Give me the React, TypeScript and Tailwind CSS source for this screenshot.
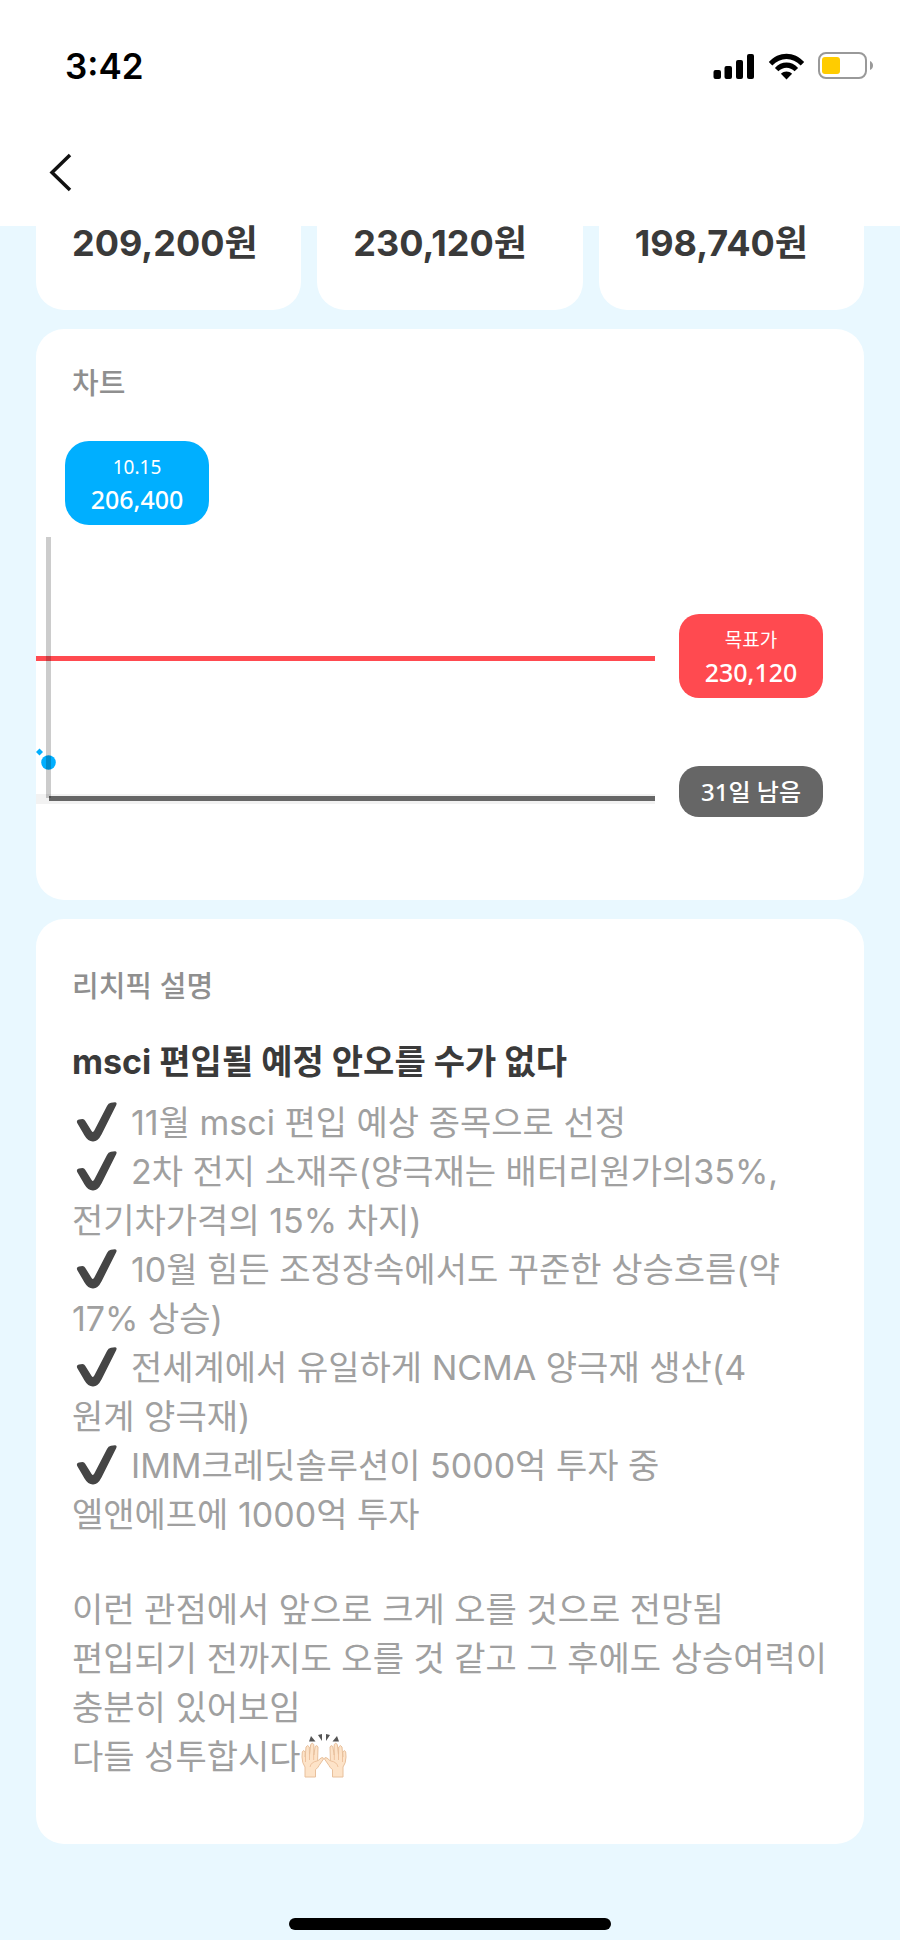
const prices = ['209,200원', '230,120원', '198,740원']

const points = [
  '11월 msci 편입 예상 종목으로 선정',
  '2차 전지 소재주(양극재는 배터리원가의35%,\n전기차가격의 15% 차지)',
  '10월 힘든 조정장속에서도 꾸준한 상승흐름(약\n17% 상승)',
  '전세계에서 유일하게 NCMA 양극재 생산(4\n원계 양극재)',
  'IMM크레딧솔루션이 5000억 투자 중\n엘앤에프에 1000억 투자'
]

const closing =
  '이런 관점에서 앞으로 크게 오를 것으로 전망됨\n편입되기 전까지도 오를 것 같고 그 후에도 상승여력이\n충분히 있어보임\n다들 성투합시다'

function SignalIcon() {
  return (
    <svg width="42" height="27" viewBox="0 0 42 27">
      <rect x="0.5" y="17" width="7.5" height="9" rx="2" />
      <rect x="11.5" y="13" width="7.5" height="13" rx="2" />
      <rect x="23" y="7" width="7" height="19" rx="2" />
      <rect x="34" y="1" width="7" height="25" rx="2" />
    </svg>
  )
}

function WifiIcon() {
  return (
    <svg width="37" height="27" viewBox="0 0 37 27">
      <path d="M.8 9.1C10.5-2.2 26.5-2.2 36.2 9.1L32.7 12.5C24.8 3.8 12.2 3.8 4.3 12.5Z" />
      <path d="M6.9 14.9C13.4 7.7 23.6 7.7 30.1 14.9L26.6 18.3C22 13.6 15 13.6 10.4 18.3Z" />
      <path d="M12.9 20.7C16.2 17.6 20.8 17.6 24.1 20.7L18.5 26.5Z" />
    </svg>
  )
}

function BatteryIcon() {
  return (
    <svg width="56" height="28" viewBox="0 0 56 28">
      <rect x="1" y="1" width="47" height="25" rx="7" fill="none" stroke="#999" strokeWidth="2" />
      <rect x="4" y="5" width="18" height="17" rx="3" fill="#ffcc00" />
      <path d="M52 9Q55 10.5 55 13.5T52 18Z" fill="#999" />
    </svg>
  )
}

function CheckIcon() {
  return (
    <svg className="inline-block mr-2 -mt-2" width="51" height="40" viewBox="0 0 51 40" role="img" aria-label="✔">
      <path
        d="M5.2 21Q4 18.3 7 17.6L10.5 17Q12.3 17 13.2 18.7L19.6 29Q21 31 22.3 28.5L35 4Q36.2 1.3 39 .8L43 .3Q45.3 .5 44.3 3L29.5 32.5Q26 39.5 21 39.4Q16 39.5 12.5 33.5Z"
        fill="#454545"
      />
    </svg>
  )
}

function Hand() {
  return (
    <g>
      <path
        d="M4 44V34Q1 30 1 24L1.3 19Q2.3 16 4.2 19V24L5 14Q6.5 11 8.3 14L8.5 22L9.7 11.5Q11.3 9 12.8 11.5V22L14.2 13.5Q16 11.5 17 14L16.6 28L20 25Q22.5 23.7 22.5 26L18 32.5Q17 35 14.5 36.5V44Z"
        fill="#fde3c8"
        stroke="#e8c09c"
        strokeWidth="1"
        strokeLinejoin="round"
      />
      <path d="M4.5 24V29M8.5 21V27M12.7 21V27M9 34Q10 29 16 28" fill="none" stroke="#eec29e" strokeWidth="1" />
    </g>
  )
}

function RaisedHands() {
  return (
    <svg className="inline-block -mt-2" width="46" height="46" viewBox="0 0 46 46" role="img" aria-label="🙌🏻">
      <Hand />
      <g transform="translate(46 0) scale(-1 1)">
        <Hand />
      </g>
      <path d="M10 3L14.5 8.5L8 8.5ZM17 2L21 1V8ZM29 2L25 1V8ZM36 3L31.5 8.5L38 8.5Z" fill="#555" />
    </svg>
  )
}

function PriceChart() {
  return (
    <svg className="block w-full h-[270px]">
      <rect x="0" y="257" width="100%" height="10" fill="#f2f2f2" />
      <rect x="0" y="119" width="100%" height="5" fill="#ff4a50" />
      <rect x="13" y="259" width="100%" height="5" fill="#666" />
      <path d="M3.5 211.5L7 215L3.5 218.5L0 215Z" fill="#00afff" />
      <circle cx="12.5" cy="225.5" r="7.3" fill="#00afff" />
      <rect x="10" y="0" width="5" height="261" fill="#000" fillOpacity="0.2" />
    </svg>
  )
}

export default function App() {
  return (
    <div className="min-h-screen bg-white font-['Inter','Noto_Sans_CJK_KR',sans-serif]">
      <header className="h-[226px] bg-white">
        <div className="flex items-center justify-between h-[132px] pl-[65px] pr-[26px]">
          <span className="text-[35px] leading-[40px] font-semibold text-black">3:42</span>
          <div className="flex items-center gap-[13px]">
            <SignalIcon />
            <WifiIcon />
            <BatteryIcon />
          </div>
        </div>
        <button aria-label="뒤로" className="flex items-center h-20 pl-12 pr-6">
          <svg width="25" height="40" viewBox="0 0 25 40" fill="none" stroke="#111" strokeWidth="3.5">
            <path d="M22 3L4 20.5L22 38" />
          </svg>
        </button>
      </header>

      <main className="bg-[#e9f8ff] px-9 pb-[10px]">
        <div className="grid grid-cols-3 gap-4">
          {prices.map(price => (
            <div key={price} className="h-[84px] bg-white rounded-b-[28px] pl-9 text-[36px] leading-[34px] font-bold text-[#3a3a3a]">
              {price}
            </div>
          ))}
        </div>

        <section className="mt-[19px] bg-white rounded-[28px] pt-9 pb-[83px]">
          <h2 className="pl-9 text-[29px] leading-[38px] font-medium text-[#8f8f8f]">차트</h2>
          <div className="mt-[38px] ml-[29px] w-36 h-[84px] flex flex-col items-center justify-center rounded-[24px] bg-[#00afff] text-white font-['Noto_Sans','Noto_Sans_CJK_KR',sans-serif]">
            <span className="text-[19px] leading-[32px]">10.15</span>
            <span className="text-[25px] leading-[32px] font-medium">206,400</span>
          </div>
          <div className="mt-3 flex">
            <div className="flex-1">
              <PriceChart />
            </div>
            <div className="w-36 ml-6 mr-[41px] pt-[77px] text-white font-['Noto_Sans','Noto_Sans_CJK_KR',sans-serif]">
              <div className="h-[84px] flex flex-col items-center justify-center rounded-[20px] bg-[#ff4a50]">
                <span className="text-[19px] leading-[32px]">목표가</span>
                <span className="text-[25px] leading-[32px] font-medium">230,120</span>
              </div>
              <div className="mt-[68px] h-[51px] flex items-center justify-center rounded-[20px] bg-[#666] text-[24px] font-medium">
                31일 남음
              </div>
            </div>
          </div>
        </section>

        <section className="mt-[19px] bg-white rounded-[28px] px-9 pt-[49px] pb-[63px]">
          <h2 className="text-[29px] leading-[38px] font-medium text-[#8f8f8f]">리치픽 설명</h2>
          <h3 className="mt-8 text-[34px] leading-[48px] font-bold text-[#3a3a3a]">msci 편입될 예정 안오를 수가 없다</h3>
          <div className="mt-3 text-[34px] leading-[49px] text-[#a0a0a0] whitespace-pre-line">
            {points.map(point => (
              <p key={point}>
                <CheckIcon />
                {point}
              </p>
            ))}
            <p className="mt-[46px]">
              {closing}
              <RaisedHands />
            </p>
          </div>
        </section>

        <div className="mt-[74px] mx-auto w-[322px] h-3 rounded-full bg-black" />
      </main>
    </div>
  )
}
